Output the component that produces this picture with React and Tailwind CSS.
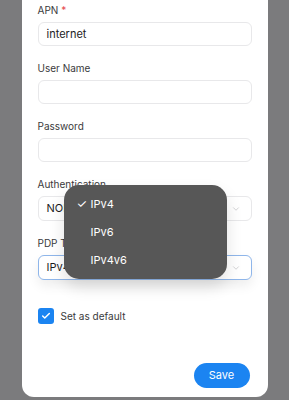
import { Check, ChevronDown } from 'lucide-react';

function Field({ label, required, value }) {
  return (
    <div className="flex flex-col">
      <div className="h-[14px] text-[10px] leading-[14px] text-[#3a3a3c]">
        {label}
        {required && <span className="ml-[3px] text-[#e5484d]">*</span>}
      </div>
      <div className="mt-[5px] flex h-[24px] items-center rounded-[6px] border border-[#e8e8ea] bg-white px-[8px] text-[11px] text-[#1c1c1e]">
        {value}
      </div>
    </div>
  );
}

function SelectField({ label, value, focused }) {
  return (
    <div className="flex flex-col">
      <div className="h-[14px] text-[10px] leading-[14px] text-[#3a3a3c]">{label}</div>
      <div
        className={`mt-[5px] flex h-[25px] items-center justify-between rounded-[6px] border bg-white pl-[8px] pr-[10px] text-[11px] text-[#1c1c1e] ${
          focused ? 'border-[#8fb6ea] shadow-[0_6px_12px_rgba(0,0,0,0.07)]' : 'border-[#e8e8ea]'
        }`}
      >
        <span>{value}</span>
        <ChevronDown size={10} strokeWidth={1.5} className="text-[#b8b8bc]" />
      </div>
    </div>
  );
}

export default function App() {
  return (
    <div
      className="flex h-[400px] w-[289px] justify-center overflow-hidden bg-[#7b7b7d]"
      style={{ fontFamily: 'Inter, "Liberation Sans", sans-serif' }}
    >
      <div className="relative h-[397px] w-[246px] rounded-b-[12px] bg-white px-[16px] pt-[3px]">
        <div className="flex flex-col gap-[15px]">
          <Field label="APN" required value="internet" />
          <Field label="User Name" value="" />
          <Field label="Password" value="" />
          <SelectField label="Authentication" value="NONE" />
          <SelectField label="PDP Type" value="IPv4" focused />
        </div>

        <div className="mt-[28px] flex items-center gap-[7px]">
          <div className="flex h-[16px] w-[16px] items-center justify-center rounded-[3px] bg-[#1b84f1]">
            <Check size={10} strokeWidth={3.5} className="text-white" />
          </div>
          <span className="text-[10px] text-[#3a3a3c]">Set as default</span>
        </div>

        <div className="mt-[39px] flex justify-end pr-[2px]">
          <button className="h-[25px] w-[56px] rounded-full bg-[#1b84f1] text-[11px] text-white">Save</button>
        </div>

        {/* dropdown menu */}
        <div className="absolute left-[42px] top-[185px] flex h-[94px] w-[163px] flex-col justify-center rounded-[15px] bg-[#575757] shadow-[0_8px_16px_rgba(0,0,0,0.12)]">
          <div className="flex h-[28px] items-center text-[11px] text-white">
            <span className="w-[27px] pl-[13px] text-[12px] leading-none">✓</span>
            <span>IPv4</span>
          </div>
          <div className="flex h-[28px] items-center pl-[27px] text-[11px] text-white">IPv6</div>
          <div className="flex h-[28px] items-center pl-[27px] text-[11px] text-white">IPv4v6</div>
        </div>
      </div>
    </div>
  );
}
